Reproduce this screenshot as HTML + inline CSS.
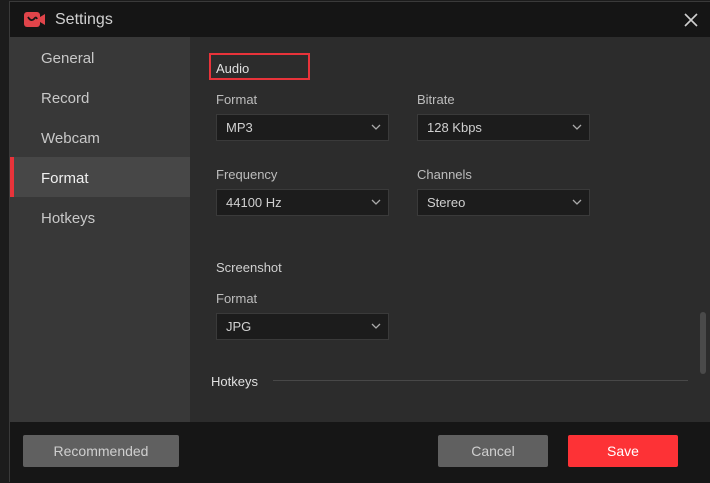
<!DOCTYPE html>
<html><head><meta charset="utf-8"><style>
*{margin:0;padding:0;box-sizing:border-box}
body{width:710px;height:482px;background:#1c1c1c;font-family:"Liberation Sans",sans-serif;position:relative;overflow:hidden}
.win{position:absolute;left:9px;top:1px;width:701px;height:481px;border-left:1px solid #3a3a3a;border-top:1px solid #3a3a3a;background:#2c2c2c}
.title{position:absolute;left:0;top:0;width:700px;height:35px;background:#151515}
.title span{position:absolute;left:45px;top:9px;color:#d0d0d0;font-size:16px}
.side{position:absolute;left:0;top:35px;width:180px;height:385px;background:#383838}
.side .t{position:absolute;left:31px;color:#c8c8c8;font-size:15px}
.sel{position:absolute;left:0;top:120px;width:180px;height:40px;background:#474747;border-left:4px solid #e8333a}
.footer{position:absolute;left:0;top:420px;width:700px;height:61px;background:#161616}
.btn{position:absolute;height:32px;border-radius:2px;text-align:center;line-height:32px;font-size:14px}
.lbl{position:absolute;color:#bdbdbd;font-size:13px}
.dd{position:absolute;width:173px;height:27px;background:#1c1c1c;border:1px solid #3a3a3a;color:#d0d0d0;font-size:13px;line-height:25px;padding-left:9px}
.dd svg{position:absolute;right:7px;top:9px}
</style></head><body>
<div class="win">
 <div class="title">
  <svg style="position:absolute;left:14px;top:10px" width="22" height="15" viewBox="0 0 22 15"><rect x="0" y="0" width="16" height="15" rx="3" fill="#e0444a"/><path d="M16 5 L21 2 L21 13 L16 10Z" fill="#e0444a"/><path d="M4 5 Q7 10 10 7 Q12 4 13 7" stroke="#151515" stroke-width="1.8" fill="none"/></svg>
  <span>Settings</span>
  <svg style="position:absolute;left:674px;top:11px" width="14" height="14" viewBox="0 0 14 14"><path d="M1 1L13 13M13 1L1 13" stroke="#cfcfcf" stroke-width="1.6"/></svg>
 </div>
 <div class="side">
  <div class="sel"></div>
  <div class="t" style="top:13px">General</div>
  <div class="t" style="top:53px">Record</div>
  <div class="t" style="top:93px">Webcam</div>
  <div class="t" style="top:133px;color:#f0f0f0">Format</div>
  <div class="t" style="top:173px">Hotkeys</div>
 </div>
 <div style="position:absolute;left:199px;top:51px;width:101px;height:27px;border:2px solid #e8333a"></div>
 <div class="lbl" style="left:206px;top:59px;color:#e0e0e0">Audio</div>
 <div class="lbl" style="left:206px;top:90px">Format</div>
 <div class="lbl" style="left:407px;top:90px">Bitrate</div>
 <div class="dd" style="left:206px;top:112px">MP3<svg width="10" height="6"><path d="M1 1L5 5L9 1" stroke="#aaa" stroke-width="1.3" fill="none"/></svg></div>
 <div class="dd" style="left:407px;top:112px">128 Kbps<svg width="10" height="6"><path d="M1 1L5 5L9 1" stroke="#aaa" stroke-width="1.3" fill="none"/></svg></div>
 <div class="lbl" style="left:206px;top:165px">Frequency</div>
 <div class="lbl" style="left:407px;top:165px">Channels</div>
 <div class="dd" style="left:206px;top:187px">44100 Hz<svg width="10" height="6"><path d="M1 1L5 5L9 1" stroke="#aaa" stroke-width="1.3" fill="none"/></svg></div>
 <div class="dd" style="left:407px;top:187px">Stereo<svg width="10" height="6"><path d="M1 1L5 5L9 1" stroke="#aaa" stroke-width="1.3" fill="none"/></svg></div>
 <div class="lbl" style="left:206px;top:258px;color:#d0d0d0">Screenshot</div>
 <div class="lbl" style="left:206px;top:289px">Format</div>
 <div class="dd" style="left:206px;top:311px">JPG<svg width="10" height="6"><path d="M1 1L5 5L9 1" stroke="#aaa" stroke-width="1.3" fill="none"/></svg></div>
 <div class="lbl" style="left:201px;top:372px;color:#e0e0e0">Hotkeys</div>
 <div style="position:absolute;left:263px;top:378px;width:415px;height:1px;background:#484848"></div>
 <div style="position:absolute;left:690px;top:310px;width:6px;height:62px;border-radius:3px;background:#4a4a4a"></div>
 <div class="footer">
  <div class="btn" style="left:13px;top:13px;width:156px;background:#606060;color:#cfcfcf">Recommended</div>
  <div class="btn" style="left:428px;top:13px;width:110px;background:#606060;color:#cfcfcf">Cancel</div>
  <div class="btn" style="left:558px;top:13px;width:110px;background:#fd3236;color:#fff">Save</div>
 </div>
</div>
</body></html>
